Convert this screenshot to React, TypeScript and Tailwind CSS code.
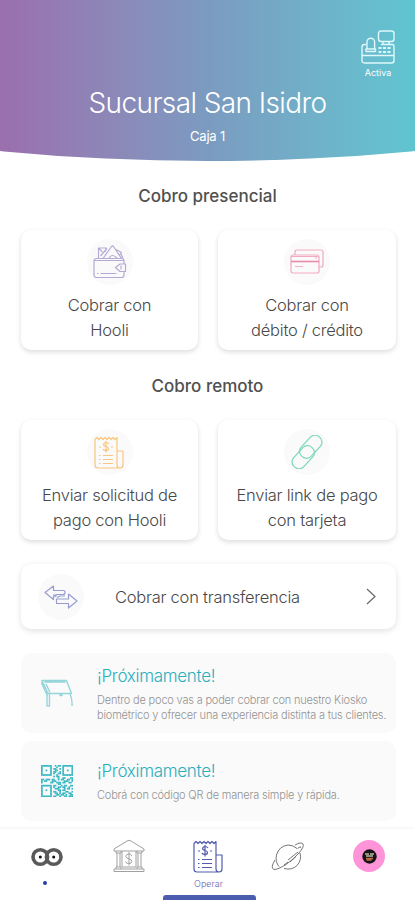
import type { ReactNode } from "react";

const QR_ROWS = [
  "1111111..1.11.1111111",
  "1.....1...1...1.....1",
  "1.....1.11..1.1.....1",
  "1..1..1..11...1..1..1",
  "1.....1.11..1.1.....1",
  "1.....1.1..11.1.....1",
  "1111111...1...1111111",
  "........1.11.........",
  "...........1..11...11",
  "11.111.11..1.11..11.1",
  "1.11...111.....111..1",
  "1.....11..111.11..11.",
  "...........11........",
  "1111111.11...1.11..11",
  "1.....1.1..11.11..1..",
  "1.....1..111...1.11.1",
  "1..1..1....11.11.....",
  "1.....1.11..1...11..1",
  "1.....1..11.1.11..11.",
  "1.....1...11.11.1..11",
  "1111111.11..1..11.111",
];

function RegisterIcon() {
  return (
    <svg width="34" height="34" viewBox="0 0 34 34" fill="none" stroke="#e0f7fb" strokeWidth="1.400" strokeLinejoin="round">
      <rect x="17.500" y="1" width="15.500" height="10.500" rx="2.500" />
      <path d="M22 11.500v3M28 11.500v3M20 14.500h11.500q1.500 0 1.500 1.500v14.500q0 2.500-2.500 2.500H3.500Q1 33 1 30.500V17q0-2.500 2.500-2.500H5M1 25.500h32" />
      <path d="M6 19v-7a3.800 3.800 0 0 1 7.600 0v7M5 19h9.500v2.500H5z" />
      <path strokeWidth="1.800" strokeDasharray="3 1.500" d="M17.500 18h13M17.500 22h13" />
    </svg>
  );
}

function WalletIcon() {
  return (
    <svg width="34" height="34" viewBox="0 0 34 34" fill="none" stroke="#b5aad3" strokeWidth="1.200" strokeLinejoin="round">
      <rect x="1" y="13.500" width="30" height="19" rx="2.500" />
      <path d="M1 15.500h30M5.500 13.500V3h8l-1.500 4M7.500 11 14 3.500M5.500 3l4 4M10 13.500 18.500 1.500q1-1 2 0l8 12M16 13q3-5 8 0M23 4.500l5.500 3-2 2.500M28 9l2 4.500" />
      <path d="M32.500 19h-5.500l-4.500 3.500 4.500 4h5.500zM28 20.500v4" fill="#fafafc" />
      <path d="M7.500 28.500h16M4 28.500h1.500" />
    </svg>
  );
}

function CardsIcon() {
  return (
    <svg width="34" height="26" viewBox="0 0 34 26" fill="none" stroke="#f2abc0" strokeWidth="1.200" strokeLinejoin="round">
      <path d="M5 6V3q0-2 2-2h24q2 0 2 2v13q0 2-2 2h-2" />
      <rect x="1" y="6" width="28" height="18" rx="2" />
      <path stroke="#e98aa8" strokeWidth="1.600" d="M1 12.500h28" />
      <path d="M1 7.500h28M25 9h2" />
      <path strokeWidth="0.900" d="M5 17.500h8" />
    </svg>
  );
}

function ReceiptIcon({ color }: { color: string }) {
  return (
    <svg width="32" height="34" viewBox="0 0 32 34" fill="none" stroke={color} strokeWidth="1.200" strokeLinejoin="round">
      <path d="M23 16V2.500L21 4.500 19 2.500 17 4.500 15 2.500 13 4.500 11 2.500 9 4.500 7 2.500 5 4.500 3 2.500 1 4.500V30q0 3 3 3h22q3 0 3-3V16h-6v14q0 3 3 3" />
      <path d="M15 9q-1-1.500-3-1.500T9.500 9.500q0 1.500 2.500 2t2.500 2q0 2-2.500 2T9 14M12 6v11.500" />
      <path d="M5 12h2M17 12h2M5 20.500h1.500M9 20.500h10M5 24.500h1.500M9 24.500h10M5 28.500h1.500M9 28.500h10" />
    </svg>
  );
}

function LinkIcon() {
  return (
    <svg width="32" height="34" viewBox="0 0 32 34" fill="none" stroke="#7fd9b6" strokeWidth="1.300">
      <rect x="6.750" y="5" width="26" height="13.500" rx="6.200" transform="rotate(-47 19.750 11.750)" />
      <rect x="-0.750" y="15.500" width="26" height="13.500" rx="6.200" transform="rotate(-47 12.250 22.250)" />
    </svg>
  );
}

function TransferIcon() {
  return (
    <svg width="34" height="24" viewBox="0 0 34 24" fill="none" stroke="#989dd1" strokeWidth="1.200" strokeLinejoin="round">
      <path d="M9.500 1 1 7.500 9.500 14.500v-3.500H12V9.500h7q2 0 2-2t-2-2H9.500z" />
      <path d="M24.500 9 33 16l-8.500 7v-4.500H12.500v-4.500h12zM13 12.500l3-1.500h5M9.500 9.500 12 11.500" />
    </svg>
  );
}

function KioskIcon() {
  return (
    <svg width="32" height="28" viewBox="0 0 32 28" fill="none" stroke="#95d5db" strokeWidth="1.400" strokeLinejoin="round">
      <path d="M1 1.500h24.500l5 13H7zM3.500 3h21M5 5l4 8.500M1 1.500V5l5.500 12M2 5v2.500l4 8M6 14.500V27h2.500V15M29 15q2.500 5 2 12" />
      <path d="M19 15v1.500h2V15z" />
    </svg>
  );
}

function QrIcon() {
  return (
    <svg width="32" height="32" viewBox="0 0 21 21" fill="#35b6c3">
      {QR_ROWS.map((row, y) =>
        row.split("").map((cell, x) =>
          cell === "1" ? <rect key={`${x}-${y}`} x={x} y={y} width="1.120" height="1.120" /> : null
        )
      )}
    </svg>
  );
}

function OwlIcon() {
  return (
    <svg width="34" height="20" viewBox="0 0 34 20" fill="none" stroke="#5a5a5a">
      <circle cx="10.300" cy="10" r="7.300" strokeWidth="3.600" />
      <circle cx="23.700" cy="10" r="7.300" strokeWidth="3.600" />
      <circle cx="10.300" cy="10" r="1.500" fill="#111" stroke="none" />
      <circle cx="23.700" cy="10" r="1.500" fill="#111" stroke="none" />
    </svg>
  );
}

function BankIcon() {
  return (
    <svg width="32" height="34" viewBox="0 0 32 34" fill="none" stroke="#a0a0a0" strokeWidth="1" strokeLinejoin="round">
      <path d="M1 10 14 2q2-1.500 4 0l13 8v2H1zM3 12v2h5v-2M24 12v2h5v-2M4 14v14M7 14v14M25 14v14M28 14v14M3 30v-2h5v2M24 30v-2h5v2M1 30h30v2.500H1z" />
      <path d="M9 12v16h14V12" />
      <path d="M19 17q-1-2-3.200-2t-3 2.200q0 2 3 2.600t3 2.600q0 2.200-3 2.200T12.500 22.500M16 13v13.500" />
    </svg>
  );
}

function PlanetIcon() {
  return (
    <svg width="34" height="30" viewBox="0 0 34 30" fill="none" stroke="#666" strokeWidth="0.900">
      <path d="M8 24.500Q4 20 5.500 13 8 4 17 3q5 0 9 3.500M29 11q2 7-3 12.500-5 5-13 3" />
      <path d="M24 3q6-3.500 8-1 1.500 2.500-4 9-5 6-13 11.500-8 5-12 5Q-1 26 4 18" />
      <path d="M26.500 6.500q4-3 3-.500M17 18l10-8M19 20l6-5.500M13 23l4-3" />
    </svg>
  );
}

function ActionCard({ icon, children }: { icon: ReactNode; children: ReactNode }) {
  return (
    <button
      type="button"
      className="flex h-[120px] flex-col items-center rounded-[10px] bg-white pt-[9px] shadow-[0_2px_5px_rgba(0,0,0,0.14)]"
    >
      <span className="flex size-[46px] items-center justify-center rounded-full bg-[#fafafb]">{icon}</span>
      <span className="mt-[8px] text-[16.5px] leading-[25px] font-light tracking-[-0.24px] whitespace-nowrap text-[#484848]">
        {children}
      </span>
    </button>
  );
}

function SoonCard({ icon, children }: { icon: ReactNode; children: ReactNode }) {
  return (
    <div className="flex h-[80px] items-center rounded-[10px] bg-[#fafafa] pl-5">
      <div className="flex w-8 shrink-0 justify-center">{icon}</div>
      <div className="ml-6">
        <h3 className="text-[17px] leading-6 font-light tracking-[-0.3px] text-[#29afbd]">¡Próximamente!</h3>
        <p className="mt-[5px] text-[11px] leading-[15px] font-light tracking-[-0.19px] whitespace-nowrap text-[#939393]">
          {children}
        </p>
      </div>
    </div>
  );
}

export default function App() {
  return (
    <div className="flex h-[900px] w-[415px] flex-col overflow-hidden bg-white font-['Inter','Liberation_Sans',sans-serif]">
      <header className="h-[161px] shrink-0 bg-linear-to-r from-[#9a6fae] via-[#7b9bc0] to-[#5fc5d0] text-center text-white [clip-path:ellipse(1043px_500px_at_50%_-339px)]">
        <div className="flex h-[86px] justify-end pt-[30px] pr-5">
          <div className="flex w-[34px] flex-col items-center">
            <RegisterIcon />
            <span className="mt-[3px] text-[9px] leading-3">Activa</span>
          </div>
        </div>
        <h1 className="text-[28px] leading-[34px] font-[350] tracking-[-0.6px]">Sucursal San Isidro</h1>
        <p className="mt-[7px] text-[13px] leading-[18px] tracking-[-0.2px]">Caja 1</p>
      </header>

      <main className="flex h-[668px] shrink-0 flex-col pt-[23px] pr-[19px] pl-[21px]">
        <h2 className="mr-0.5 text-center text-[17px] leading-6 font-medium text-[#505050]">Cobro presencial</h2>
        <div className="mt-[22px] grid grid-cols-[177px_178px] justify-between">
          <ActionCard icon={<WalletIcon />}>
            Cobrar con
            <br />
            Hooli
          </ActionCard>
          <ActionCard icon={<CardsIcon />}>
            Cobrar con
            <br />
            débito / crédito
          </ActionCard>
        </div>

        <h2 className="mt-[24px] mr-0.5 text-center text-[17px] leading-6 font-medium text-[#505050]">Cobro remoto</h2>
        <div className="mt-[22px] grid grid-cols-[177px_178px] justify-between">
          <ActionCard icon={<ReceiptIcon color="#fac67d" />}>
            Enviar solicitud de
            <br />
            pago con Hooli
          </ActionCard>
          <ActionCard icon={<LinkIcon />}>
            Enviar link de pago
            <br />
            con tarjeta
          </ActionCard>
        </div>

        <button
          type="button"
          className="mt-[24px] flex h-[65px] shrink-0 items-center rounded-[10px] bg-white pr-[20px] pl-[17px] shadow-[0_2px_6px_rgba(0,0,0,0.12)]"
        >
          <span className="flex size-[46px] items-center justify-center rounded-full bg-[#fafafb]">
            <TransferIcon />
          </span>
          <span className="ml-[31px] text-[16.5px] leading-6 font-light tracking-[-0.24px] text-[#484848]">
            Cobrar con transferencia
          </span>
          <svg className="ml-auto" width="10" height="17" viewBox="0 0 10 17" fill="none" stroke="#666" strokeWidth="1.200">
            <path d="m1 1 8 7.500L1 16" />
          </svg>
        </button>

        <div className="mt-6 flex flex-col gap-[8px]">
          <SoonCard icon={<KioskIcon />}>
            Dentro de poco vas a poder cobrar con nuestro Kiosko
            <br />
            biométrico y ofrecer una experiencia distinta a tus clientes.
          </SoonCard>
          <SoonCard icon={<QrIcon />}>Cobrá con código QR de manera simple y rápida.</SoonCard>
        </div>
      </main>

      <nav className="relative flex h-[71px] shrink-0 bg-white pl-[5px] shadow-[0_-1px_3px_rgba(0,0,0,0.05)]">
        <div className="flex w-[83px] flex-col items-center pt-[18px]">
          <OwlIcon />
          <span className="mt-[14px] mr-[3px] size-1 rounded-full bg-[#2441a5]" />
        </div>
        <div className="flex w-[81px] justify-center pt-[10px]">
          <BankIcon />
        </div>
        <div className="flex w-[79px] flex-col items-center pt-[10px]">
          <ReceiptIcon color="#535cae" />
          <span className="mt-[5px] text-[9px] leading-3 font-light text-[#6268b0]">Operar</span>
        </div>
        <div className="flex w-[79px] justify-center pt-[13px]">
          <PlanetIcon />
        </div>
        <div className="flex w-[84px] justify-center pt-[11px]">
          <span className="flex size-8 items-center justify-center rounded-full bg-[#ff94d8]">
            <svg width="15" height="15" viewBox="0 0 15 15">
              <circle cx="7.500" cy="7.500" r="7.200" fill="#151519" />
              <path d="M3 5h4M8 5h4M4 7h7" stroke="#bbb6a0" strokeWidth="1.400" />
              <path d="M4 9.500h7M4.500 11h5" stroke="#bc6841" strokeWidth="1.500" />
            </svg>
          </span>
        </div>
        <span className="absolute bottom-0 left-[163px] h-[5px] w-[93px] rounded-t-[3px] bg-[#4c5db0]" />
      </nav>
    </div>
  );
}
